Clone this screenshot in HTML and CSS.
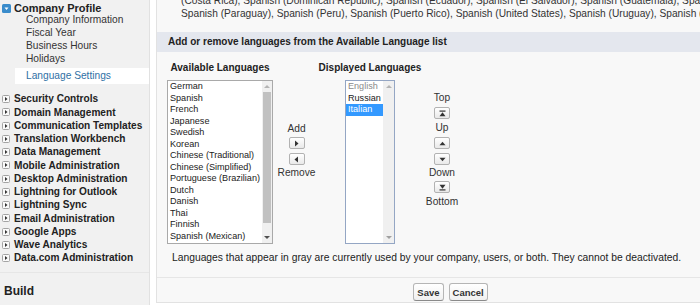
FILE: index.html
```html
<!DOCTYPE html>
<html>
<head>
  <meta charset="utf-8">
  <title>Language Settings</title>
  <link rel="stylesheet" href="styles.css">
</head>
<body>
<div class="page">

  <aside class="sidebar">
    <div class="group-head">
      <svg class="tog-open" width="9" height="9" viewBox="0 0 9 9"><rect x="0" y="0" width="9" height="9" rx="1.5" fill="#3a8ccb"/><path d="M2.5 3.5 L6.5 3.5 L4.5 6 Z" fill="#fff"/></svg>
      Company Profile
    </div>
    <ul class="sub">
      <li>Company Information</li>
      <li>Fiscal Year</li>
      <li>Business Hours</li>
      <li>Holidays</li>
    </ul>
    <div class="sub-active">Language Settings</div>
    <ul class="groups">
      <li><svg class="tog" width="8" height="8" viewBox="0 0 8 8"><rect x="0.5" y="0.5" width="7" height="7" rx="1" fill="#fafafa" stroke="#a4a4a4"/><path d="M3 2 L5.5 4 L3 6 Z" fill="#333"/></svg>Security Controls</li>
      <li><svg class="tog" width="8" height="8" viewBox="0 0 8 8"><rect x="0.5" y="0.5" width="7" height="7" rx="1" fill="#fafafa" stroke="#a4a4a4"/><path d="M3 2 L5.5 4 L3 6 Z" fill="#333"/></svg>Domain Management</li>
      <li><svg class="tog" width="8" height="8" viewBox="0 0 8 8"><rect x="0.5" y="0.5" width="7" height="7" rx="1" fill="#fafafa" stroke="#a4a4a4"/><path d="M3 2 L5.5 4 L3 6 Z" fill="#333"/></svg>Communication Templates</li>
      <li><svg class="tog" width="8" height="8" viewBox="0 0 8 8"><rect x="0.5" y="0.5" width="7" height="7" rx="1" fill="#fafafa" stroke="#a4a4a4"/><path d="M3 2 L5.5 4 L3 6 Z" fill="#333"/></svg>Translation Workbench</li>
      <li><svg class="tog" width="8" height="8" viewBox="0 0 8 8"><rect x="0.5" y="0.5" width="7" height="7" rx="1" fill="#fafafa" stroke="#a4a4a4"/><path d="M3 2 L5.5 4 L3 6 Z" fill="#333"/></svg>Data Management</li>
      <li><svg class="tog" width="8" height="8" viewBox="0 0 8 8"><rect x="0.5" y="0.5" width="7" height="7" rx="1" fill="#fafafa" stroke="#a4a4a4"/><path d="M3 2 L5.5 4 L3 6 Z" fill="#333"/></svg>Mobile Administration</li>
      <li><svg class="tog" width="8" height="8" viewBox="0 0 8 8"><rect x="0.5" y="0.5" width="7" height="7" rx="1" fill="#fafafa" stroke="#a4a4a4"/><path d="M3 2 L5.5 4 L3 6 Z" fill="#333"/></svg>Desktop Administration</li>
      <li><svg class="tog" width="8" height="8" viewBox="0 0 8 8"><rect x="0.5" y="0.5" width="7" height="7" rx="1" fill="#fafafa" stroke="#a4a4a4"/><path d="M3 2 L5.5 4 L3 6 Z" fill="#333"/></svg>Lightning for Outlook</li>
      <li><svg class="tog" width="8" height="8" viewBox="0 0 8 8"><rect x="0.5" y="0.5" width="7" height="7" rx="1" fill="#fafafa" stroke="#a4a4a4"/><path d="M3 2 L5.5 4 L3 6 Z" fill="#333"/></svg>Lightning Sync</li>
      <li><svg class="tog" width="8" height="8" viewBox="0 0 8 8"><rect x="0.5" y="0.5" width="7" height="7" rx="1" fill="#fafafa" stroke="#a4a4a4"/><path d="M3 2 L5.5 4 L3 6 Z" fill="#333"/></svg>Email Administration</li>
      <li><svg class="tog" width="8" height="8" viewBox="0 0 8 8"><rect x="0.5" y="0.5" width="7" height="7" rx="1" fill="#fafafa" stroke="#a4a4a4"/><path d="M3 2 L5.5 4 L3 6 Z" fill="#333"/></svg>Google Apps</li>
      <li><svg class="tog" width="8" height="8" viewBox="0 0 8 8"><rect x="0.5" y="0.5" width="7" height="7" rx="1" fill="#fafafa" stroke="#a4a4a4"/><path d="M3 2 L5.5 4 L3 6 Z" fill="#333"/></svg>Wave Analytics</li>
      <li><svg class="tog" width="8" height="8" viewBox="0 0 8 8"><rect x="0.5" y="0.5" width="7" height="7" rx="1" fill="#fafafa" stroke="#a4a4a4"/><path d="M3 2 L5.5 4 L3 6 Z" fill="#333"/></svg>Data.com Administration</li>
    </ul>
    <div class="build">Build</div>
  </aside>

  <main class="content">
    <p class="lang-summary">
      <span>(Costa Rica), Spanish (Dominican Republic), Spanish (Ecuador), Spanish (El Salvador), Spanish (Guatemala), Spanish (Honduras),</span>
      <span>Spanish (Paraguay), Spanish (Peru), Spanish (Puerto Rico), Spanish (United States), Spanish (Uruguay), Spanish (Venezuela)</span>
    </p>

    <h2 class="subheader">Add or remove languages from the Available Language list</h2>

    <div class="picker">
      <div class="col col-avail">
        <div class="label">Available Languages</div>
        <div class="listbox avail">
          <ul class="options">
            <li>German</li>
            <li>Spanish</li>
            <li>French</li>
            <li>Japanese</li>
            <li>Swedish</li>
            <li>Korean</li>
            <li>Chinese (Traditional)</li>
            <li>Chinese (Simplified)</li>
            <li>Portuguese (Brazilian)</li>
            <li>Dutch</li>
            <li>Danish</li>
            <li>Thai</li>
            <li>Finnish</li>
            <li>Spanish (Mexican)</li>
          </ul>
          <div class="scrollbar">
            <span class="sb-btn"><i class="tri-up"></i></span>
            <span class="thumb"></span>
            <span class="sb-fill"></span>
            <span class="sb-btn"><i class="tri-down"></i></span>
          </div>
        </div>
      </div>

      <div class="col col-move">
        <div class="cap">Add</div>
        <button class="mini first"><svg width="7" height="7" viewBox="0 0 7 7"><path d="M2 0.5 L5.5 3.5 L2 6.5 Z" fill="#333"/></svg></button>
        <button class="mini"><svg width="7" height="7" viewBox="0 0 7 7"><path d="M5 0.5 L1.5 3.5 L5 6.5 Z" fill="#333"/></svg></button>
        <div class="cap after">Remove</div>
      </div>

      <div class="col col-shown">
        <div class="label">Displayed Languages</div>
        <div class="listbox shown">
          <ul class="options">
            <li class="locked">English</li>
            <li>Russian</li>
            <li class="selected">Italian</li>
          </ul>
          <div class="scrollbar track">
            <span class="sb-btn"><i class="tri-up"></i></span>
            <span class="sb-fill"></span>
            <span class="sb-btn"><i class="tri-down light"></i></span>
          </div>
        </div>
      </div>

      <div class="col col-order">
        <div class="cap">Top</div>
        <button class="mini first"><svg width="7" height="7" viewBox="0 0 7 7"><rect x="0.5" y="0.5" width="6" height="1.2" fill="#333"/><path d="M3.5 2.3 L6.5 6.3 L0.5 6.3 Z" fill="#333"/></svg></button>
        <div class="cap after">Up</div>
        <button class="mini first"><svg width="7" height="7" viewBox="0 0 7 7"><path d="M3.5 1.8 L6.5 5.3 L0.5 5.3 Z" fill="#333"/></svg></button>
        <button class="mini"><svg width="7" height="7" viewBox="0 0 7 7"><path d="M0.5 1.8 L6.5 1.8 L3.5 5.3 Z" fill="#333"/></svg></button>
        <div class="cap near">Down</div>
        <button class="mini near"><svg width="7" height="7" viewBox="0 0 7 7"><path d="M0.5 0.7 L6.5 0.7 L3.5 4.7 Z" fill="#333"/><rect x="0.5" y="5.3" width="6" height="1.2" fill="#333"/></svg></button>
        <div class="cap after">Bottom</div>
      </div>
    </div>

    <p class="note">Languages that appear in gray are currently used by your company, users, or both. They cannot be deactivated.</p>

    <div class="actions">
      <button class="btn">Save</button>
      <button class="btn">Cancel</button>
    </div>
  </main>

</div>
</body>
</html>
```

FILE: styles.css
```css
body { margin:0; width:700px; height:305px; overflow:hidden; background:#fff; color:#222; font-family:"Liberation Sans", Arial, sans-serif; }
ul { list-style:none; margin:0; padding:0; }

.page { display:flex; width:750px; height:305px; }

/* setup tree */
.sidebar { flex:none; width:150px; box-sizing:border-box; background:#f1f1f1; border-right:1px solid #e1e1e1; padding-top:2px; }
.group-head { display:flex; align-items:center; height:12px; padding-left:2px; font-size:11px; font-weight:bold; color:#222; }
.tog-open { margin-right:3px; flex:none; }
.sub { margin-top:-1px; padding-left:26px; font-size:10.2px; line-height:13px; color:#333; }
.sub-active { margin:3px 0 0 15px; height:16px; line-height:16px; padding-left:11px; background:#fff; color:#2f70a5; font-size:10.2px; }
.groups { margin-top:8.4px; padding-left:2px; font-size:10.1px; font-weight:bold; line-height:13.25px; color:#222; }
.groups li { display:flex; align-items:center; white-space:nowrap; }
.tog { flex:none; margin-right:4px; }
.build { margin-top:7px; border-top:1px solid #e6e6e6; padding:11px 0 0 4px; font-size:12px; line-height:14px; font-weight:bold; color:#222; }

/* main panel */
.content { flex:none; width:588px; height:303px; margin-left:6px; box-sizing:border-box; background:#f8f8f8; border-left:1px solid #e2e2e2; border-bottom:1px solid #e2e2e2; }
.lang-summary { margin:-5px 0 0; padding-left:24px; font-size:10.2px; line-height:12.5px; color:#333; white-space:nowrap; }
.lang-summary span { display:block; }
.subheader { margin:12px 0 0; height:20px; line-height:20px; padding-left:11px; background:#e4e7ee; font-size:10px; font-weight:bold; color:#222; }

.picker { display:flex; align-items:flex-start; margin-top:10px; padding-left:10px; }
.col { display:flex; flex-direction:column; align-items:center; flex:none; }
.col-avail { width:106px; }
.col-move { width:37px; margin-left:5px; padding-top:61px; }
.col-shown { width:104px; margin-left:3px; }
.col-order { width:34px; margin-left:3px; padding-top:30px; }
.label { font-size:10px; font-weight:bold; line-height:12px; white-space:nowrap; color:#222; }
.cap { font-size:10.2px; line-height:12px; color:#333; }
.cap.after { margin-top:3px; }
.cap.near { margin-top:2px; }
.col-move .cap.after { margin-top:2px; }

.listbox { display:flex; margin-top:6px; height:164px; box-sizing:border-box; background:#fff; border:1px solid #a9a9a9; }
.avail { width:106px; }
.shown { width:50px; border-color:#94a6c4; }
.options { flex:1; min-width:0; font-size:9.1px; line-height:11.5px; color:#222; white-space:nowrap; overflow:hidden; }
.options li { padding-left:2px; }
.options li.locked { color:#8a8a8a; }
.options li.selected { background:#3399ff; color:#fff; }

.scrollbar { flex:none; width:10px; display:flex; flex-direction:column; align-items:stretch; background:#f0f0f0; }
.shown .scrollbar { width:11px; }
.sb-btn { height:11px; display:flex; align-items:center; justify-content:center; }
.thumb { height:131px; margin:0 1px; background:#c1c1c1; }
.sb-fill { flex:1; }
.tri-up { width:0; height:0; border-left:3px solid transparent; border-right:3px solid transparent; border-bottom:3px solid #b4b4b4; }
.tri-down { width:0; height:0; border-left:3px solid transparent; border-right:3px solid transparent; border-top:3px solid #505050; }
.tri-down.light { border-top-color:#a0a0a0; }

.mini { display:flex; align-items:center; justify-content:center; width:16px; height:12px; padding:0; margin-top:4px; box-sizing:border-box; border:1px solid #b2b2b2; border-radius:2px; background:linear-gradient(#ffffff, #e9e9e9); }
.mini.first { margin-top:2px; }
.col-order .mini.first { margin-top:3px; }
.mini.near { margin-top:2px; }

.note { margin:8px 0 0; padding-left:15px; font-size:10.3px; line-height:12px; color:#222; white-space:nowrap; }

.actions { display:flex; justify-content:center; gap:5px; margin-top:13px; padding-top:5px; border-top:1px solid #e6e6e6; }
.btn { height:18px; padding:0 3px; font-family:"Liberation Sans", Arial, sans-serif; font-size:9.5px; font-weight:bold; color:#333; border:1px solid #b5b5b5; border-bottom-color:#8a8a8a; border-radius:3px; background:linear-gradient(#ffffff, #f0f0f0); }
```
